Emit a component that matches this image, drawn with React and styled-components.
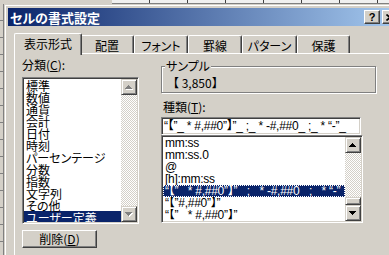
import React from 'react';
import styled, { createGlobalStyle } from 'styled-components';

const C = {
  face: '#d4d0c8',
  hi: '#ffffff',
  shadow: '#808080',
  dark: '#404040',
  navy: '#0a246a',
  light: '#a6caf0',
};

const GlobalStyle = createGlobalStyle`
  *, *::before, *::after { box-sizing: border-box; }
  html, body { margin: 0; padding: 0; background: ${C.face}; }
  #root { width: 389px; height: 255px; overflow: hidden; }
`;

const Screen = styled.div`
  width: 389px;
  height: 255px;
  overflow: hidden;
  background: ${C.face};
  font-family: "Noto Sans CJK JP", "Liberation Sans", sans-serif;
  font-size: 12px;
  line-height: 14px;
  font-feature-settings: "palt";
  color: #000;
  display: flex;
  flex-direction: column;
`;

const SheetRow = styled.div`
  flex: none;
  height: 4px;
  display: flex;
`;

const SheetCorner = styled.div`
  flex: none;
  width: 112px;
  background: ${C.face};
`;

const SheetCells = styled.div`
  flex: 1;
  border-bottom: 1px solid ${C.shadow};
  background: repeating-linear-gradient(to right, #f0f0f0 0 37px, ${C.dark} 37px 38px);
`;

const Main = styled.div`
  flex: 1;
  min-height: 0;
  display: flex;
`;

const SheetSide = styled.div`
  flex: none;
  width: 4px;
  background: repeating-linear-gradient(to bottom, ${C.face} 0 16px, ${C.shadow} 16px 17px);
  border-right: 1px solid ${C.shadow};
`;

const Dialog = styled.div`
  flex: none;
  width: 399px;
  border-top: 1px solid ${C.face};
  border-left: 1px solid ${C.face};
  box-shadow: inset 1px 1px 0 ${C.hi};
  padding: 3px 3px 0 3px;
  background: ${C.face};
  display: flex;
  flex-direction: column;
`;

const TitleBar = styled.div`
  flex: none;
  height: 18px;
  display: flex;
  align-items: center;
  padding: 0 2px 0 2px;
  background: linear-gradient(to right, ${C.navy}, ${C.light});
  color: #fff;
  font-weight: bold;
  font-size: 13px;
  line-height: 15px;
`;

const TitleText = styled.span`
  white-space: nowrap;
`;

const CaptionButtons = styled.div`
  margin-left: auto;
  display: flex;
  gap: 2px;
`;

const CaptionButton = styled.div`
  width: 16px;
  height: 14px;
  background: ${C.face};
  border: 1px solid;
  border-color: ${C.hi} ${C.dark} ${C.dark} ${C.hi};
  box-shadow: inset -1px -1px 0 ${C.shadow};
  display: flex;
  align-items: center;
  justify-content: center;
  color: #000;
  font-family: "Liberation Sans", sans-serif;
  font-weight: bold;
  font-size: 11px;
  line-height: 11px;
`;

const Client = styled.div`
  flex: 1;
  display: flex;
  flex-direction: column;
  padding: 7px 0 0 6px;
`;

const TabStrip = styled.div`
  flex: none;
  height: 20px;
  display: flex;
  align-items: flex-end;
`;

const Tab = styled.div`
  flex: none;
  position: relative;
  z-index: ${p => (p.$active ? 1 : 0)};
  width: ${p => p.$w}px;
  height: ${p => (p.$active ? 22 : 18)}px;
  margin: 0 ${p => (p.$active ? -2 : 0)}px ${p => (p.$active ? -2 : 0)}px 0;
  background: ${C.face};
  border-top: 1px solid ${C.hi};
  border-left: 1px solid ${C.hi};
  border-right: 1px solid ${C.dark};
  border-radius: 2px 2px 0 0;
  box-shadow: inset -1px 0 0 ${C.shadow};
  padding-top: 3px;
  text-align: center;
  white-space: nowrap;
`;

const Panel = styled.div`
  flex: 1;
  border-top: 1px solid ${C.hi};
  border-left: 1px solid ${C.hi};
  padding: 4px 0 0 7px;
  display: flex;
  align-items: flex-start;
  gap: 22px;
`;

const Column = styled.div`
  flex: none;
  width: ${p => p.$w}px;
  display: flex;
  flex-direction: column;
`;

const Label = styled.div`
  height: 14px;
  margin-top: ${p => p.$mt || 0}px;
  padding-left: ${p => p.$pl || 0}px;
  white-space: nowrap;
`;

const Key = styled.span`
  text-decoration: underline;
  text-underline-offset: 1px;
`;

const Sunken = styled.div`
  background: #fff;
  border: 1px solid;
  border-color: ${C.shadow} ${C.hi} ${C.hi} ${C.shadow};
  box-shadow: inset 1px 1px 0 ${C.dark}, inset -1px -1px 0 ${C.face};
  padding: 1px;
`;

const ListBox = styled(Sunken)`
  width: ${p => p.$w}px;
  height: ${p => p.$h}px;
  margin-top: ${p => p.$mt || 0}px;
  display: flex;
  overflow: hidden;
`;

const Rows = styled.div`
  flex: 1;
  min-width: 0;
  overflow: hidden;
`;

const Row = styled.div`
  height: 12px;
  line-height: 12px;
  padding: 1px 0 0 2px;
  white-space: nowrap;
  background: ${p => (p.$sel ? C.navy : 'transparent')};
  color: ${p => (p.$sel ? '#fff' : '#000')};
`;

const FormatRow = styled(Row)`
  padding-top: 0;
  font-family: "Liberation Sans", "Noto Sans CJK JP", sans-serif;
  font-feature-settings: normal;
  font-size: 12px;
  letter-spacing: -0.25px;
  overflow: hidden;
  outline: ${p => (p.$sel ? `1px dotted #fff` : 'none')};
  outline-offset: -1px;
`;

const ScrollBar = styled.div`
  flex: none;
  width: 16px;
  display: flex;
  flex-direction: column;
  background-color: ${C.face};
  background-image: repeating-conic-gradient(${C.hi} 0% 25%, ${C.face} 0% 50%);
  background-size: 2px 2px;
`;

const ScrollButton = styled.div`
  flex: none;
  width: 16px;
  height: ${p => p.$h || 16}px;
  background: ${C.face};
  border: 1px solid;
  border-color: ${C.face} ${C.dark} ${C.dark} ${C.face};
  box-shadow: inset 1px 1px 0 ${C.hi}, inset -1px -1px 0 ${C.shadow};
  display: flex;
  align-items: center;
  justify-content: center;
`;

const Track = styled.div`
  flex: 1;
  display: flex;
  flex-direction: column;
  justify-content: flex-end;
`;

const ArrowSvg = styled.svg`
  display: block;
`;

function Arrow({ up, disabled }) {
  const rects = [0, 1, 2, 3].map(i => ({ x: 3 - i, w: 2 * i + 1, y: up ? i : 3 - i }));
  return (
    <ArrowSvg width="8" height="5" viewBox="0 0 8 5">
      {disabled &&
        rects.map((r, i) => (
          <rect key={'s' + i} x={r.x + 1} y={r.y + 1} width={r.w} height="1" fill="#fff" />
        ))}
      {rects.map((r, i) => (
        <rect key={i} x={r.x} y={r.y} width={r.w} height="1" fill={disabled ? C.shadow : '#000'} />
      ))}
    </ArrowSvg>
  );
}

const PushButton = styled.div`
  width: ${p => p.$w}px;
  height: 18px;
  margin-top: ${p => p.$mt || 0}px;
  background: ${C.face};
  border: 1px solid;
  border-color: ${C.hi} ${C.dark} ${C.dark} ${C.hi};
  box-shadow: inset -1px -1px 0 ${C.shadow};
  display: flex;
  align-items: center;
  justify-content: center;
  line-height: 14px;
`;

const GroupBox = styled.div`
  position: relative;
  width: 215px;
  height: 27px;
  margin-top: ${p => p.$mt || 0}px;
  border: 1px solid ${C.shadow};
  box-shadow: inset 1px 1px 0 ${C.hi}, 1px 1px 0 ${C.hi};
  padding: 9px 0 0 5px;
`;

const GroupLegend = styled.span`
  position: absolute;
  top: -8px;
  left: 3px;
  padding: 0 1px;
  background: ${C.face};
  line-height: 14px;
`;

const SampleText = styled.div`
  white-space: nowrap;
  line-height: 14px;
  font-feature-settings: normal;
`;

const TextField = styled(Sunken)`
  width: ${p => p.$w}px;
  height: 18px;
  margin-top: ${p => p.$mt || 0}px;
  padding: 1px 1px 1px 2px;
  font-family: "Liberation Sans", "Noto Sans CJK JP", sans-serif;
  font-feature-settings: normal;
  font-size: 12px;
  letter-spacing: -0.25px;
  line-height: 14px;
  white-space: nowrap;
  overflow: hidden;
`;

const CloseGlyph = () => (
  <ArrowSvg width="8" height="7" viewBox="0 0 8 7">
    <path d="M0.5 0.5 L7.5 6.5 M7.5 0.5 L0.5 6.5" stroke="#000" strokeWidth="1.6" fill="none" />
  </ArrowSvg>
);

const tabs = [
  { label: '表示形式', w: 68, active: true },
  { label: '配置', w: 54 },
  { label: 'フォント', w: 54 },
  { label: '罫線', w: 54 },
  { label: 'パターン', w: 55 },
  { label: '保護', w: 53 },
];

const categories = [
  '標準', '数値', '通貨', '会計', '日付', '時刻', 'パーセンテージ',
  '分数', '指数', '文字列', 'その他', 'ユーザー定義',
];

const formats = [
  'mm:ss',
  'mm:ss.0',
  '@',
  '[h]:mm:ss',
  '“【”_ * #,##0”】”_ ;_ * -#,##0_ ;_ * “-”_',
  '“【”#,##0”】”',
  '“【”_ * #,##0”】”',
];

export default function App() {
  return (
    <Screen>
      <GlobalStyle />
      <SheetRow>
        <SheetCorner />
        <SheetCells />
      </SheetRow>
      <Main>
        <SheetSide />
        <Dialog>
          <TitleBar>
            <TitleText>セルの書式設定</TitleText>
            <CaptionButtons>
              <CaptionButton>?</CaptionButton>
              <CaptionButton><CloseGlyph /></CaptionButton>
            </CaptionButtons>
          </TitleBar>
          <Client>
            <TabStrip>
              {tabs.map(t => (
                <Tab key={t.label} $w={t.w} $active={t.active}>{t.label}</Tab>
              ))}
            </TabStrip>
            <Panel>
              <Column $w={117}>
                <Label>分類(<Key>C</Key>):</Label>
                <ListBox $w={117} $h={147} $mt={5}>
                  <Rows>
                    {categories.map((c, i) => (
                      <Row key={c} $sel={i === categories.length - 1}>{c}</Row>
                    ))}
                  </Rows>
                  <ScrollBar>
                    <ScrollButton><Arrow up disabled /></ScrollButton>
                    <Track />
                    <ScrollButton><Arrow disabled /></ScrollButton>
                  </ScrollBar>
                </ListBox>
                <PushButton $w={75} $mt={6}>削除(<Key>D</Key>)</PushButton>
              </Column>
              <Column $w={216}>
                <GroupBox $mt={8}>
                  <GroupLegend>サンプル</GroupLegend>
                  <SampleText>【 3,850】</SampleText>
                </GroupBox>
                <Label $mt={7} $pl={2}>種類(<Key>T</Key>):</Label>
                <TextField $w={200} $mt={3}>“【”_ * #,##0”】”_ ;_ * -#,##0_ ;_ * “-”_</TextField>
                <ListBox $w={202} $h={88}>
                  <Rows>
                    {formats.map((f, i) => (
                      <FormatRow key={f} $sel={i === 4}>{f}</FormatRow>
                    ))}
                  </Rows>
                  <ScrollBar>
                    <ScrollButton><Arrow up /></ScrollButton>
                    <Track>
                      <ScrollButton $h={8} />
                    </Track>
                    <ScrollButton><Arrow /></ScrollButton>
                  </ScrollBar>
                </ListBox>
              </Column>
            </Panel>
          </Client>
        </Dialog>
      </Main>
    </Screen>
  );
}
